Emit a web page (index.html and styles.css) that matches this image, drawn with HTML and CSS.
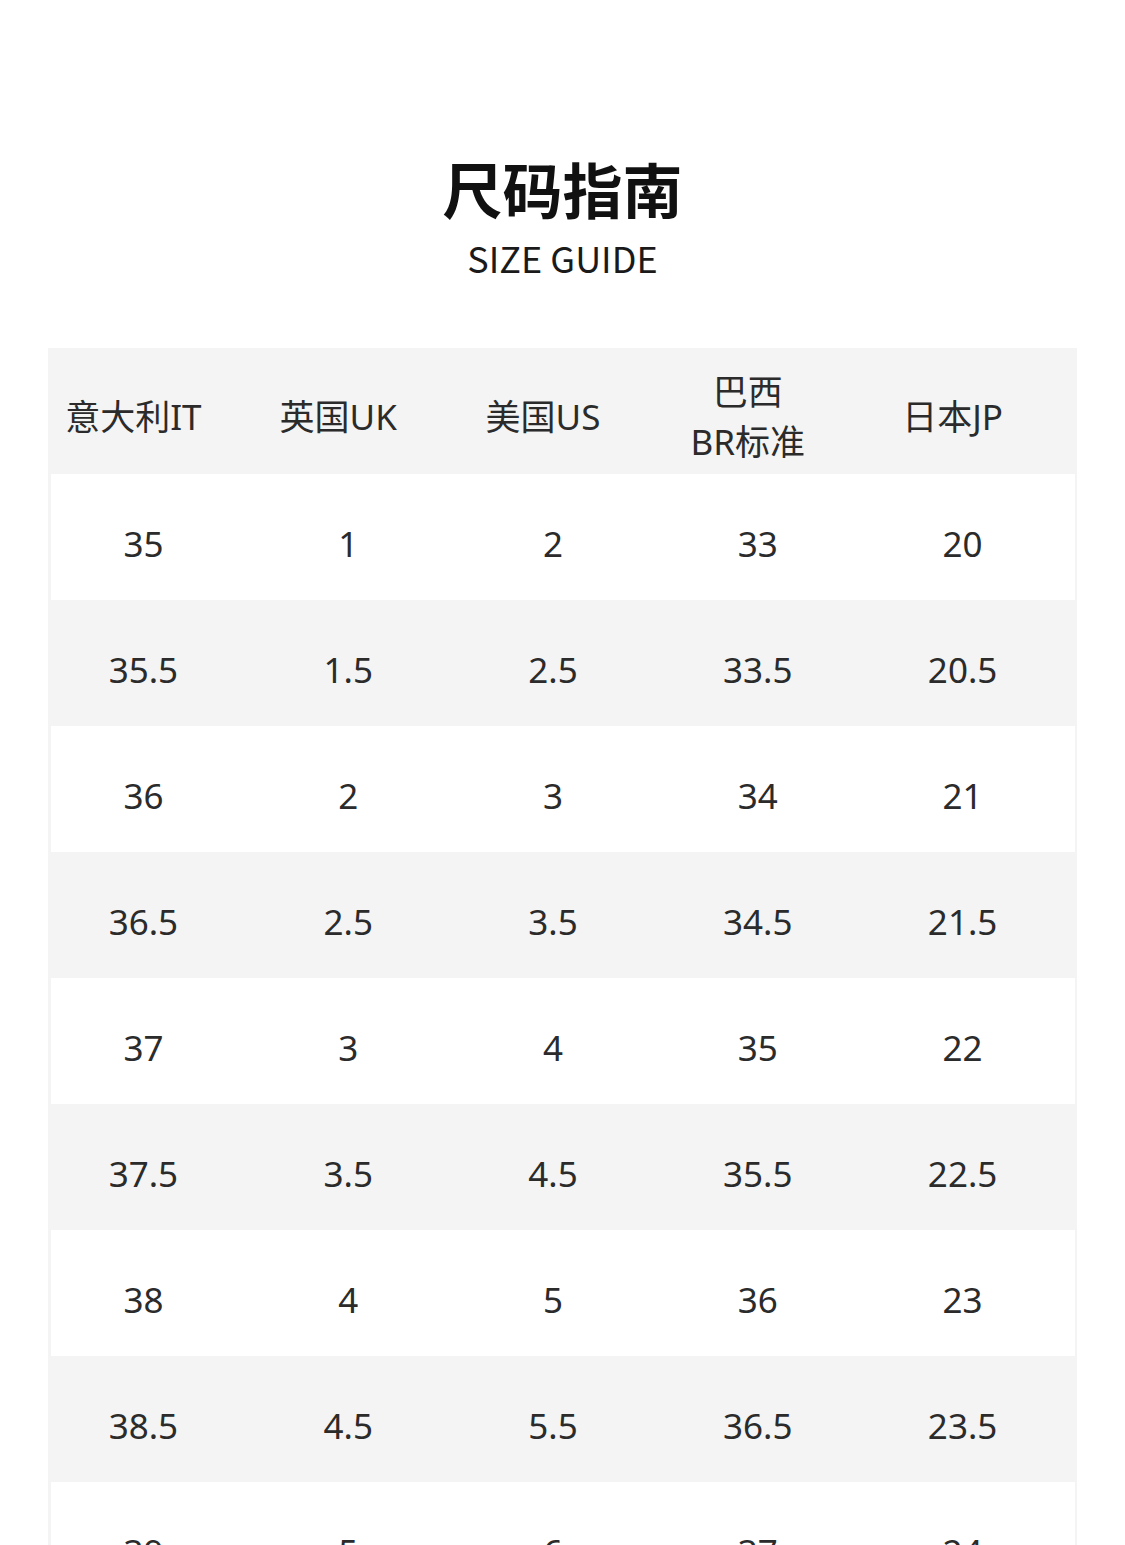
FILE: index.html
```html
<!DOCTYPE html>
<html lang="zh-CN">
<head>
<meta charset="utf-8">
<title>尺码指南 SIZE GUIDE</title>
<link rel="stylesheet" href="styles.css">
</head>
<body>
<main class="page">
  <header class="heading">
    <h1 class="title">尺码指南</h1>
    <p class="subtitle">SIZE GUIDE</p>
  </header>
  <section class="table">
    <div class="row head">
      <div class="cell">意大利IT</div>
      <div class="cell">英国UK</div>
      <div class="cell">美国US</div>
      <div class="cell">巴西<br>BR标准</div>
      <div class="cell">日本JP</div>
    </div>
    <div class="row white"><div class="cell">35</div><div class="cell">1</div><div class="cell">2</div><div class="cell">33</div><div class="cell">20</div></div>
    <div class="row grey"><div class="cell">35.5</div><div class="cell">1.5</div><div class="cell">2.5</div><div class="cell">33.5</div><div class="cell">20.5</div></div>
    <div class="row white"><div class="cell">36</div><div class="cell">2</div><div class="cell">3</div><div class="cell">34</div><div class="cell">21</div></div>
    <div class="row grey"><div class="cell">36.5</div><div class="cell">2.5</div><div class="cell">3.5</div><div class="cell">34.5</div><div class="cell">21.5</div></div>
    <div class="row white"><div class="cell">37</div><div class="cell">3</div><div class="cell">4</div><div class="cell">35</div><div class="cell">22</div></div>
    <div class="row grey"><div class="cell">37.5</div><div class="cell">3.5</div><div class="cell">4.5</div><div class="cell">35.5</div><div class="cell">22.5</div></div>
    <div class="row white"><div class="cell">38</div><div class="cell">4</div><div class="cell">5</div><div class="cell">36</div><div class="cell">23</div></div>
    <div class="row grey"><div class="cell">38.5</div><div class="cell">4.5</div><div class="cell">5.5</div><div class="cell">36.5</div><div class="cell">23.5</div></div>
    <div class="row white"><div class="cell">39</div><div class="cell">5</div><div class="cell">6</div><div class="cell">37</div><div class="cell">24</div></div>
  </section>
</main>
</body>
</html>
```

FILE: styles.css
```css
html, body {
  margin: 0;
  padding: 0;
  background: #ffffff;
  overflow: hidden;
}

body {
  font-family: "Noto Sans", "Noto Sans CJK SC", sans-serif;
  color: #2b2b2b;
}

.page {
  width: 1125px;
}

.heading {
  display: flex;
  flex-direction: column;
  align-items: center;
  padding-top: 146px;
}

.title {
  margin: 0;
  font-family: "Noto Sans CJK SC", sans-serif;
  font-size: 60px;
  font-weight: 700;
  line-height: 84px;
  color: #111111;
}

.subtitle {
  margin: 0;
  margin-top: 5px;
  font-family: "Noto Sans CJK SC", sans-serif;
  font-size: 36px;
  line-height: 44px;
  color: #1a1a1a;
}

.table {
  margin: 69px 48px 0 48px;
  background: #f4f4f4;
  padding: 0 2px 0 3px;
}

.row {
  display: grid;
  grid-template-columns: repeat(5, 1fr);
  height: 126px;
  align-items: center;
}

.row.white {
  background: #ffffff;
}

.row.grey {
  background: #f4f4f4;
}

.cell {
  text-align: center;
  font-size: 35px;
  line-height: 48px;
  padding-right: 20px;
  padding-top: 14px;
}

.head .cell {
  padding-right: 40px;
  padding-top: 12px;
  line-height: 50px;
}
```
